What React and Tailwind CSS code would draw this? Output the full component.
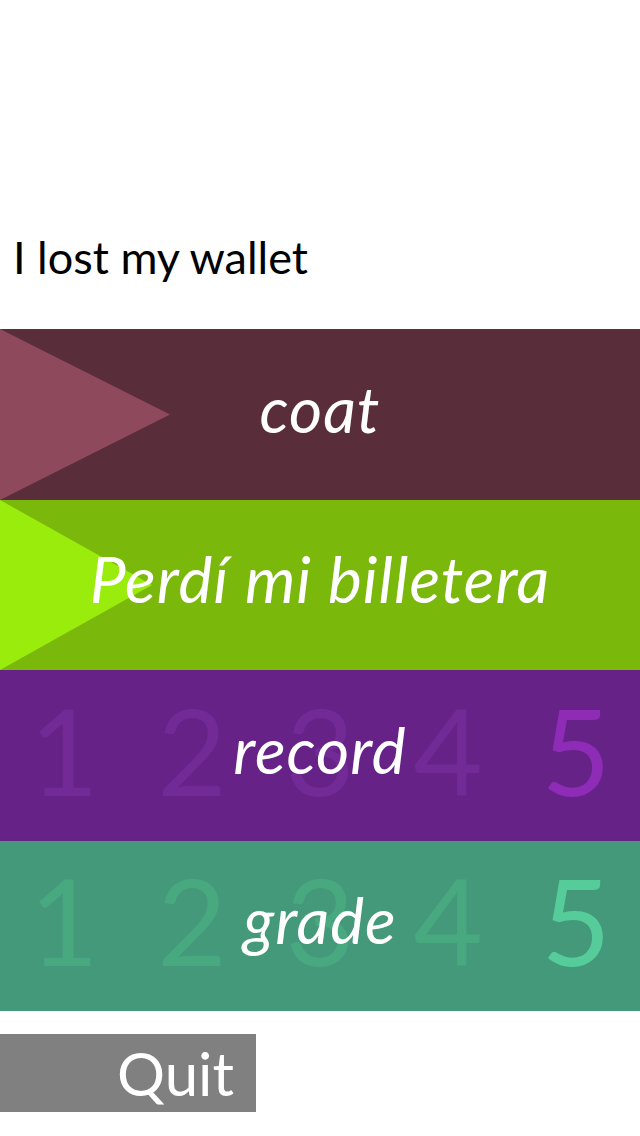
export default function App() {
  const font = { fontFamily: "Lato, 'Noto Sans', sans-serif" };
  const digits = [1, 2, 3, 4, 5];
  return (
    <div className="w-[640px] h-[1136px] bg-white flex flex-col" style={font}>
      <div className="h-[329px] flex flex-col justify-end">
        <div className="text-[45px] leading-none text-black pl-[13px] pb-[49px]">I lost my wallet</div>
      </div>

      <div className="relative h-[171px] bg-[#5a2d3b] flex items-center justify-center pb-[12px]">
        <svg className="absolute left-0 top-0" width="171" height="171" viewBox="0 0 171 171">
          <polygon points="0,0 170,85.5 0,171" fill="#8e4a5c" />
        </svg>
        <span className="relative italic text-white text-[64px] tracking-[1px] leading-none">coat</span>
      </div>

      <div className="relative h-[170px] bg-[#7ab80b] flex items-center justify-center pb-[12px]">
        <svg className="absolute left-0 top-0" width="160" height="170" viewBox="0 0 160 170">
          <polygon points="0,0 152,85 0,170" fill="#9aec0c" />
        </svg>
        <span className="relative italic text-white text-[64px] tracking-[1px] leading-none">Perdí mi billetera</span>
      </div>

      <div className="relative h-[171px] bg-[#662286]">
        <div className="absolute inset-0 grid grid-cols-5 items-center pb-[12px]">
          {digits.map((d) => (
            <span
              key={d}
              className={`text-center text-[120px] leading-none font-normal ${d === 5 ? "text-[#8e2cb8]" : "text-[#712a96]"}`}
            >
              {d}
            </span>
          ))}
        </div>
        <div className="relative h-full flex items-center justify-center pb-[12px]">
          <span className="italic text-white text-[64px] tracking-[1px] leading-none">record</span>
        </div>
      </div>

      <div className="relative h-[170px] bg-[#43997a]">
        <div className="absolute inset-0 grid grid-cols-5 items-center pb-[12px]">
          {digits.map((d) => (
            <span
              key={d}
              className={`text-center text-[120px] leading-none font-normal ${d === 5 ? "text-[#55cc9a]" : "text-[#48a880]"}`}
            >
              {d}
            </span>
          ))}
        </div>
        <div className="relative h-full flex items-center justify-center pb-[12px]">
          <span className="italic text-white text-[64px] tracking-[1px] leading-none">grade</span>
        </div>
      </div>

      <div className="mt-[23px] w-[256px] h-[78px] bg-[#808080] flex items-center justify-end pr-[22px]">
        <span className="text-white text-[60px] leading-none">Quit</span>
      </div>
    </div>
  );
}
